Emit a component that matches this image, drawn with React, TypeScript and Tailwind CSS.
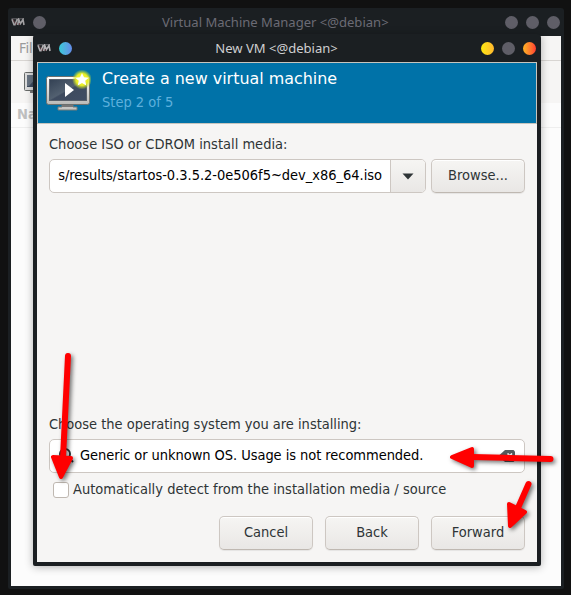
import React from "react";

const ui = "font-['DejaVu_Sans_Condensed','DejaVu_Sans',sans-serif] [font-stretch:condensed] text-[14.5px] leading-[18px] whitespace-nowrap";
const title = "font-['Noto_Sans',sans-serif] text-[13.05px] leading-[18px] whitespace-nowrap";
const button =
  "flex h-[34px] w-[94px] items-center justify-center rounded-[5px] border border-[#cdc7c2] border-b-[#bfb8b1] bg-gradient-to-b from-[#f6f5f3] to-[#e9e7e5] pb-[2px] text-[#2e3436] shadow-[inset_0_1px_#fff,0_1px_1px_rgba(0,0,0,0.07)]";

function VmLogo({ dim = false }: { dim?: boolean }) {
  return (
    <svg width="15" height="8" viewBox="0 0 15 8" fill="none">
      <path d="M.5.8h12.5" stroke={dim ? "#67666a" : "#77777b"} strokeWidth="1" />
      <path d="M1 1.2 3 6.8h1L6.3 1M6.7 7 7.7 1.5 9.5 5.5 12 1.5l1 5.5" stroke={dim ? "#a2a1a3" : "#b4b2b5"} strokeWidth="1.6" />
      <path d="m2.3 1.5 1.4 3.5M5.6 4.5 5 7M8.5 5v2" stroke="#70464c" strokeWidth=".8" />
    </svg>
  );
}

function Monitor() {
  return (
    <svg className="-ml-px -mt-px" width="46" height="42" viewBox="0 0 46 42">
      <defs>
        <linearGradient id="bezel" x2="0" y2="1"><stop stopColor="#fff" /><stop offset="1" stopColor="#b9b9b6" /></linearGradient>
        <linearGradient id="screen" x2="1" y2="1"><stop stopColor="#334154" /><stop offset=".48" stopColor="#526070" /><stop offset=".52" stopColor="#3e4b5f" /><stop offset="1" stopColor="#414e64" /></linearGradient>
        <radialGradient id="glow"><stop stopColor="#fff94d" /><stop offset=".6" stopColor="#e6ed23" /><stop offset="1" stopColor="#c4df33" stopOpacity="0" /></radialGradient>
      </defs>
      <path d="M17 35h11v3h4v3H13v-3h4z" fill="#c7c7c4" stroke="#777a77" />
      <path d="M17 36h11v2H17z" fill="#777" />
      <rect x="1.5" y="7.5" width="43" height="28" rx="2" fill="url(#bezel)" stroke="#6c706e" />
      <rect x="4.5" y="10.5" width="37" height="21" fill="url(#screen)" stroke="#59606a" />
      <path d="M20 14v14l9-7z" fill="#fff" />
      <circle cx="37" cy="10.5" r="10" fill="url(#glow)" />
      <path d="m37 4 2 4.2 4.8.5-3.6 3.1 1.1 4.8-4.3-2.5-4.3 2.5 1.1-4.8-3.6-3.1 4.8-.5z" fill="#fff" />
    </svg>
  );
}

function Arrows() {
  return (
    <svg className="pointer-events-none absolute inset-0 drop-shadow-[2px_2px_2px_rgba(0,0,0,0.55)]" width="571" height="595" fill="#f00" stroke="#f00" strokeLinecap="round" strokeLinejoin="round">
      <path d="M68 356 63 458M550.5 459l-78-2M528.5 484l-11 25" strokeWidth="6" fill="none" />
      <path d="m53 457 18 1-10 19zM452 457l20-8v17zM509 504l16 8-15 14z" strokeWidth="4" />
    </svg>
  );
}

function Dialog() {
  return (
    <section className="absolute left-[33px] top-[34px] flex h-[532px] w-[508px] flex-col rounded-t-[4px] rounded-b-[2px] bg-[#1b1f22] px-1 pb-1 shadow-[0_1px_8px_rgba(0,0,0,0.3)]">
      <header className="relative flex h-7 shrink-0 items-center">
        <VmLogo />
        <i className="ml-[7px] size-[13px] rounded-full bg-gradient-to-r from-[#34cbd8] to-[#638be9]" />
        <span className={`${title} absolute inset-x-0 text-center pr-[21px] text-[#cfcfd1]`}>New VM &lt;@debian&gt;</span>
        <div className="ml-auto flex gap-2 pr-px">
          <i className="size-[13px] rounded-full bg-gradient-to-r from-[#fce80b] to-[#ffb72d]" />
          <i className="size-[13px] rounded-full bg-[#5f5e67]" />
          <i className="size-[13px] rounded-full bg-gradient-to-r from-[#ffb323] to-[#ff3630]" />
        </div>
      </header>
      <div className="flex h-[62px] shrink-0 border border-[#c7c5be] bg-[#0072a8] pl-2 pt-[7px]">
        <Monitor />
        <div className="ml-[11px] font-['DejaVu_Sans',sans-serif] whitespace-nowrap">
          <h1 className="text-[15.93px] leading-[18px] text-white">Create a new virtual machine</h1>
          <p className={`${ui} mt-[5px] text-[#5eb0dc]`}>Step 2 of 5</p>
        </div>
      </div>
      <main className={`${ui} flex min-h-0 flex-1 flex-col bg-[#f6f5f4] px-3 pt-[11px] pb-3 text-[#2e3436]`}>
        <label>Choose ISO or CDROM install media:</label>
        <div className="mt-[6px] flex gap-[5px]">
          <div className="flex h-[34px] w-[377px] overflow-hidden rounded-[5px] border border-[#cdc7c2] bg-white">
            <div className="ml-2 flex w-[324px] items-center justify-end overflow-hidden pb-[2px] text-black"><span className="tracking-[-0.025px]">os/results/startos-0.3.5.2-0e506f5~dev_x86_64.iso</span></div>
            <div className="ml-2 flex flex-1 items-center justify-center border-l border-[#cdc7c2] bg-gradient-to-b from-[#f6f5f3] to-[#e9e7e5]">
              <svg width="12" height="7" viewBox="0 0 12 7"><path d="M.5.5h11L6 6.5z" fill="#2e3436" /></svg>
            </div>
          </div>
          <button className={button}>Browse...</button>
        </div>
        <label className="mt-auto tracking-[-0.015px]">Choose the operating system you are installing:</label>
        <div className="mt-[6px] flex h-[34px] shrink-0 items-center rounded-[5px] border border-[#cdc7c2] bg-white pl-2 pr-2 text-black">
          <svg width="16" height="16" viewBox="0 0 16 16" fill="none" stroke="#2e3436" strokeWidth="2"><circle cx="7" cy="6" r="5" /><path d="m10 9 5 5" /></svg>
          <span className="ml-[6px] pb-[2px] tracking-[-0.055px]">Generic or unknown OS. Usage is not recommended.</span>
          <svg className="ml-auto" width="17" height="14" viewBox="0 0 17 14"><path d="M6 1h8.5L16 2.5v9L14.5 13H6L.5 8V6z" fill="#555b5d" /><path d="m8.5 4.5 4.5 4.5m0-4.5L8.5 9" stroke="white" strokeWidth="1.7" /></svg>
        </div>
        <div className="mt-2 flex h-[18px] items-center pl-[4px]">
          <i className="size-4 rounded-[3px] border border-[#bfb8b1] bg-white" /><span className="ml-1 pb-[2px] tracking-[0.01px]">Automatically detect from the installation media / source</span>
        </div>
        <div className="mt-[17px] flex justify-end gap-3">
          <button className={button}>Cancel</button><button className={button}>Back</button><button className={button}>Forward</button>
        </div>
      </main>
    </section>
  );
}

export default function App() {
  return (
    <div className="relative h-[595px] w-[571px] overflow-hidden bg-[#111] p-2 pr-[6px]">
      <div className="flex h-[581px] w-[556px] flex-col rounded-t-[3px] rounded-b-[2px] bg-[#1b1f22] px-[3px] pb-[3px]">
        <header className="relative flex h-7 shrink-0 items-center">
          <VmLogo dim />
          <i className="ml-[7px] size-[13px] rounded-full bg-[#5f5e67]" />
          <span className={`${title} absolute left-[151px] text-[#6b6b75]`}>Virtual Machine Manager &lt;@debian&gt;</span>
          <div className="ml-auto flex gap-2 pr-px">
            <i className="size-[13px] rounded-full bg-[#5f5e67]" /><i className="size-[13px] rounded-full bg-[#5f5e67]" /><i className="size-[13px] rounded-full bg-[#5f5e67]" />
          </div>
        </header>
        <main className={`${ui} flex-1 bg-[#fcfcfc]`}>
          <div className="h-[25px] border-b border-[#d8d5d2] bg-[#f6f5f4] pl-2 pt-[3px] text-[#9a9b9b]">File</div>
          <div className="h-[42px] overflow-hidden bg-[#f6f5f4] pl-[13px] pt-[10px]">
            <svg width="30" height="23" viewBox="0 0 30 23"><path d="M6 19h14v3H6z" fill="#777" /><rect x=".5" y="1.5" width="29" height="18" rx="1" fill="#ddd" stroke="#686b69" /><path d="M3 4h25v12H3z" fill="#3e4c60" /><path d="M3 4h12L5 15H3z" fill="#697583" /></svg>
          </div>
          <div className="h-[25px] border-b border-[#eee] pl-[6px] pt-[2px] font-bold text-[#c0c0c0]">Name</div>
        </main>
      </div>
      <Dialog />
      <Arrows />
    </div>
  );
}
